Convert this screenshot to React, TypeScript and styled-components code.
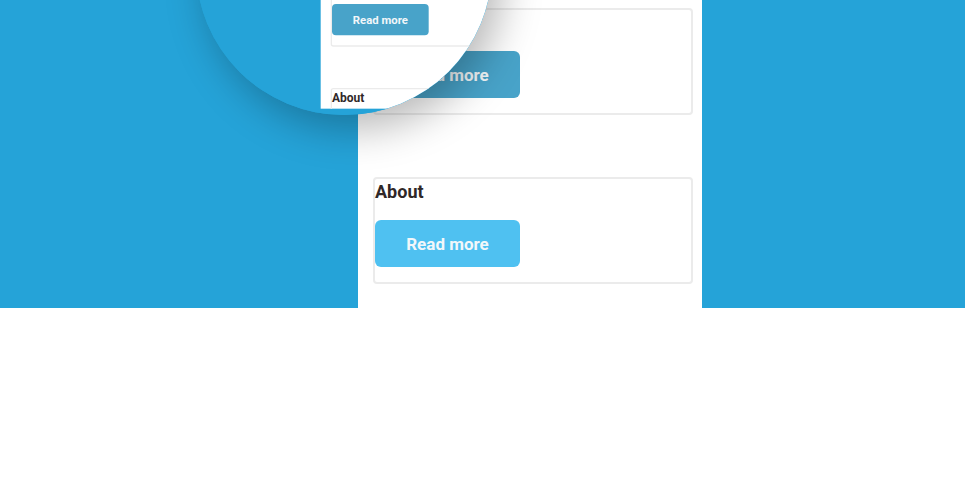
import React from "react";
import styled, { createGlobalStyle } from "styled-components";

const GlobalStyle = createGlobalStyle`
	html, body {
		margin: 0;
		padding: 0;
		background: #ffffff;
		font-family: Roboto, "Liberation Sans", sans-serif;
	}
`;

const StyledPage = styled.div`
	width: 965px;
	height: 500px;
	background: #ffffff;
	overflow: hidden;
`;

const StyledStage = styled.div`
	position: relative;
	box-sizing: border-box;
	width: 965px;
	height: 308px;
	padding-left: 358px;
	background: #25a3d8;
	overflow: hidden;
`;

const StyledColumn = styled.div<{ $height: number }>`
	box-sizing: border-box;
	width: 344px;
	height: ${(p) => p.$height}px;
	padding: 8px 10px 0 15px;
	background: #ffffff;
	display: flex;
	flex-direction: column;
	gap: 62px;
	overflow: hidden;
`;

const StyledCard = styled.div`
	box-sizing: border-box;
	width: 320px;
	border: 2px solid #ebebeb;
	border-radius: 4px;
	display: flex;
	flex-direction: column;
	align-items: flex-start;
`;

const StyledTitle = styled.h2`
	margin: 2px 0 18px;
	font-size: 18px;
	line-height: 21px;
	font-weight: 700;
	color: #2f2828;
`;

const StyledButton = styled.button<{ $active?: boolean }>`
	width: 145px;
	height: 47px;
	margin-bottom: 15px;
	border: none;
	border-radius: 6px;
	background: ${(p) => (p.$active ? "#48a3c9" : "#4fc1f1")};
	color: #f2f7fa;
	font-family: Roboto, "Liberation Sans", sans-serif;
	font-size: 17px;
	font-weight: 700;
	cursor: pointer;
`;

const StyledLens = styled.div`
	position: absolute;
	left: 196px;
	top: -181px;
	width: 296px;
	height: 296px;
	border-radius: 50%;
	overflow: hidden;
	background: #25a3d8;
	box-shadow: 10px 14px 40px rgba(0, 0, 0, 0.28);
	z-index: 2;
`;

const StyledMiniScene = styled.div`
	box-sizing: border-box;
	width: 965px;
	height: 308px;
	padding-left: 358px;
	background: #25a3d8;
	transform-origin: 0 0;
	transform: translate(-114px, 151px) scale(0.6667);
`;

const Cards = () => (
	<>
		<StyledCard>
			<StyledTitle>About</StyledTitle>
			<StyledButton $active>Read more</StyledButton>
		</StyledCard>
		<StyledCard>
			<StyledTitle>About</StyledTitle>
			<StyledButton>Read more</StyledButton>
		</StyledCard>
	</>
);

const App = () => {
	return (
		<>
			<GlobalStyle />
			<StyledPage>
				<StyledStage>
					<StyledColumn $height={308}>
						<Cards />
					</StyledColumn>

					<StyledLens>
						<StyledMiniScene>
							<StyledColumn $height={208}>
								<Cards />
							</StyledColumn>
						</StyledMiniScene>
					</StyledLens>
				</StyledStage>
			</StyledPage>
		</>
	);
};

export default App;
